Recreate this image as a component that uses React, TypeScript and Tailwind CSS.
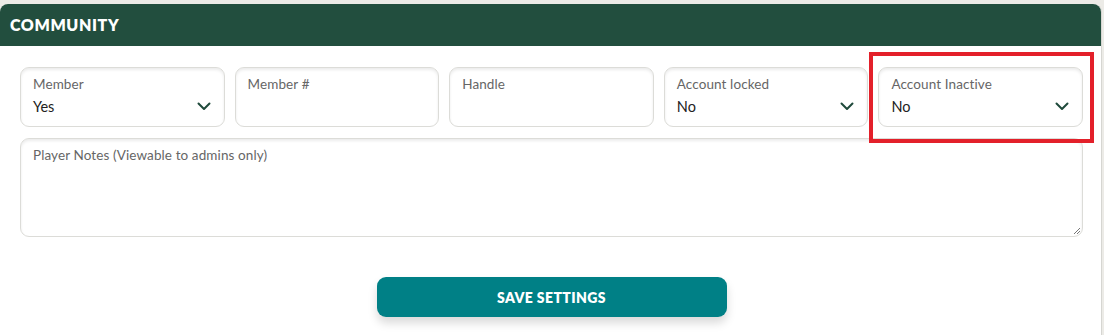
import React from "react";

function Chevron() {
  return (
    <svg width="14" height="9" viewBox="0 0 14 9" fill="none">
      <path d="M1.5 1.5 L7 7 L12.5 1.5" stroke="#1f4a3b" strokeWidth="2" strokeLinecap="round" strokeLinejoin="round" />
    </svg>
  );
}

function Field({ label, value, select }: { label: string; value?: string; select?: boolean }) {
  return (
    <div className="relative h-[60px] rounded-[9px] border border-[#dcdcd8] bg-white shadow-[inset_0_2px_3px_rgba(0,0,0,0.08)] px-3 pt-[8px]">
      <div className="text-[13.5px] leading-[16px] text-[#666] tracking-[0.1px]">{label}</div>
      {value && <div className="mt-[7px] text-[14.5px] leading-[16px] text-[#222]">{value}</div>}
      {select && (
        <div className="absolute right-[13px] top-[34px]">
          <Chevron />
        </div>
      )}
    </div>
  );
}

export default function App() {
  return (
    <div className="w-[1104px] h-[335px] bg-[#ecebe7] pt-[4px] overflow-hidden" style={{ fontFamily: "Lato, 'Open Sans', sans-serif" }}>
      <div className="relative w-[1102px] h-[331px] bg-white rounded-t-[8px] border-r border-[#d6d6d2]">
        <div className="h-[42px] bg-[#224e3e] rounded-t-[8px] flex items-center px-[10px]">
          <span className="text-white font-extrabold text-[16px] tracking-[0.6px]">COMMUNITY</span>
        </div>
        <div className="pl-[20px] pr-[18px] pt-[21px]">
          <div className="grid grid-cols-5 gap-[10px]">
            <Field label="Member" value="Yes" select />
            <Field label="Member #" />
            <Field label="Handle" />
            <Field label="Account locked" value="No" select />
            <Field label="Account Inactive" value="No" select />
          </div>
          <div className="relative mt-[11px] h-[99px] rounded-[9px] border border-[#dcdcd8] bg-white shadow-[inset_0_2px_3px_rgba(0,0,0,0.08)] px-3 pt-[8px]">
            <div className="text-[13.5px] leading-[16px] text-[#666] tracking-[0.1px]">Player Notes (Viewable to admins only)</div>
            <svg className="absolute right-[1px] bottom-[1px]" width="8" height="8" viewBox="0 0 8 8">
              <path d="M7 1 L1 7 M7 4 L4 7" stroke="#777" strokeWidth="1" />
            </svg>
          </div>
          <div className="flex justify-center mt-[40px]">
            <button className="w-[350px] h-[40px] rounded-[9px] bg-[#008086] text-white font-extrabold text-[14px] tracking-[0.4px] shadow-[0_6px_10px_rgba(0,0,0,0.15)]">
              SAVE SETTINGS
            </button>
          </div>
        </div>
        <div className="absolute left-[869px] top-[48px] w-[225px] h-[91px] border-[4px] border-[#e3202a] pointer-events-none" />
      </div>
    </div>
  );
}
